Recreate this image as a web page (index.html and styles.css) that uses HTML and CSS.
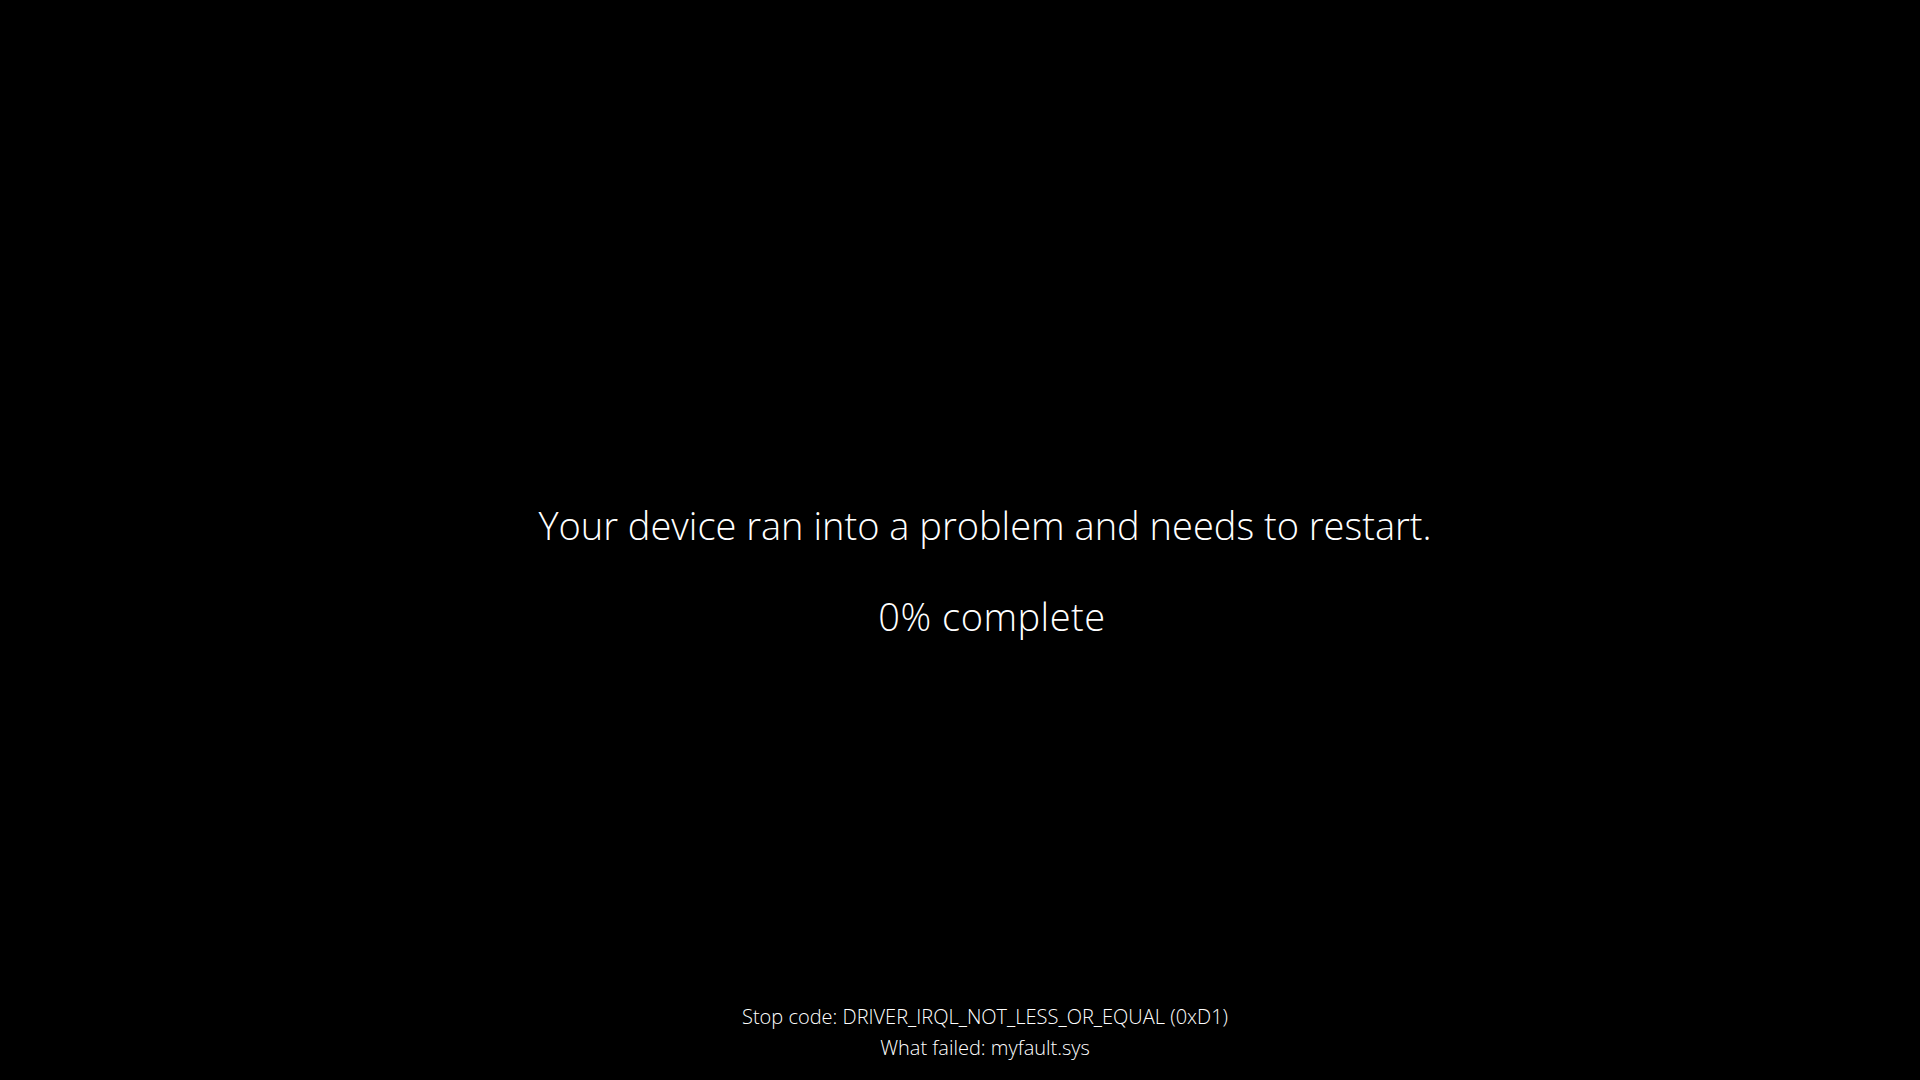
FILE: index.html
```html
<!DOCTYPE html>
<html lang="en">
<head>
<meta charset="utf-8">
<title>Restart</title>
<link rel="stylesheet" href="styles.css">
</head>
<body>
<div class="screen">
  <main class="message">
    <p class="headline">Your device ran into a problem and needs to restart.</p>
    <p class="progress">0% complete</p>
  </main>
  <footer class="details">
    <p class="detail-line">Stop code: DRIVER_IRQL_NOT_LESS_OR_EQUAL (0xD1)</p>
    <p class="detail-line">What failed: myfault.sys</p>
  </footer>
</div>
</body>
</html>
```

FILE: styles.css
```css
html, body {
  margin: 0;
  padding: 0;
  background: #000;
  height: 100%;
}

.screen {
  box-sizing: border-box;
  height: 1080px;
  display: flex;
  flex-direction: column;
  align-items: center;
  padding-left: 50px;
  color: #fff;
  font-family: "Open Sans", "Noto Sans", sans-serif;
}

.message {
  margin-top: 502px;
  display: flex;
  flex-direction: column;
  align-items: center;
  gap: 44px;
}

.headline,
.progress {
  margin: 0;
  font-size: 38px;
  font-weight: 300;
  line-height: 47px;
  white-space: nowrap;
}

.progress {
  padding-left: 14px;
  letter-spacing: 0.5px;
}

.details {
  margin-top: auto;
  padding-bottom: 17px;
  display: flex;
  flex-direction: column;
  align-items: center;
}

.detail-line {
  margin: 0;
  font-size: 20px;
  font-weight: 300;
  line-height: 31px;
  white-space: nowrap;
}
```
